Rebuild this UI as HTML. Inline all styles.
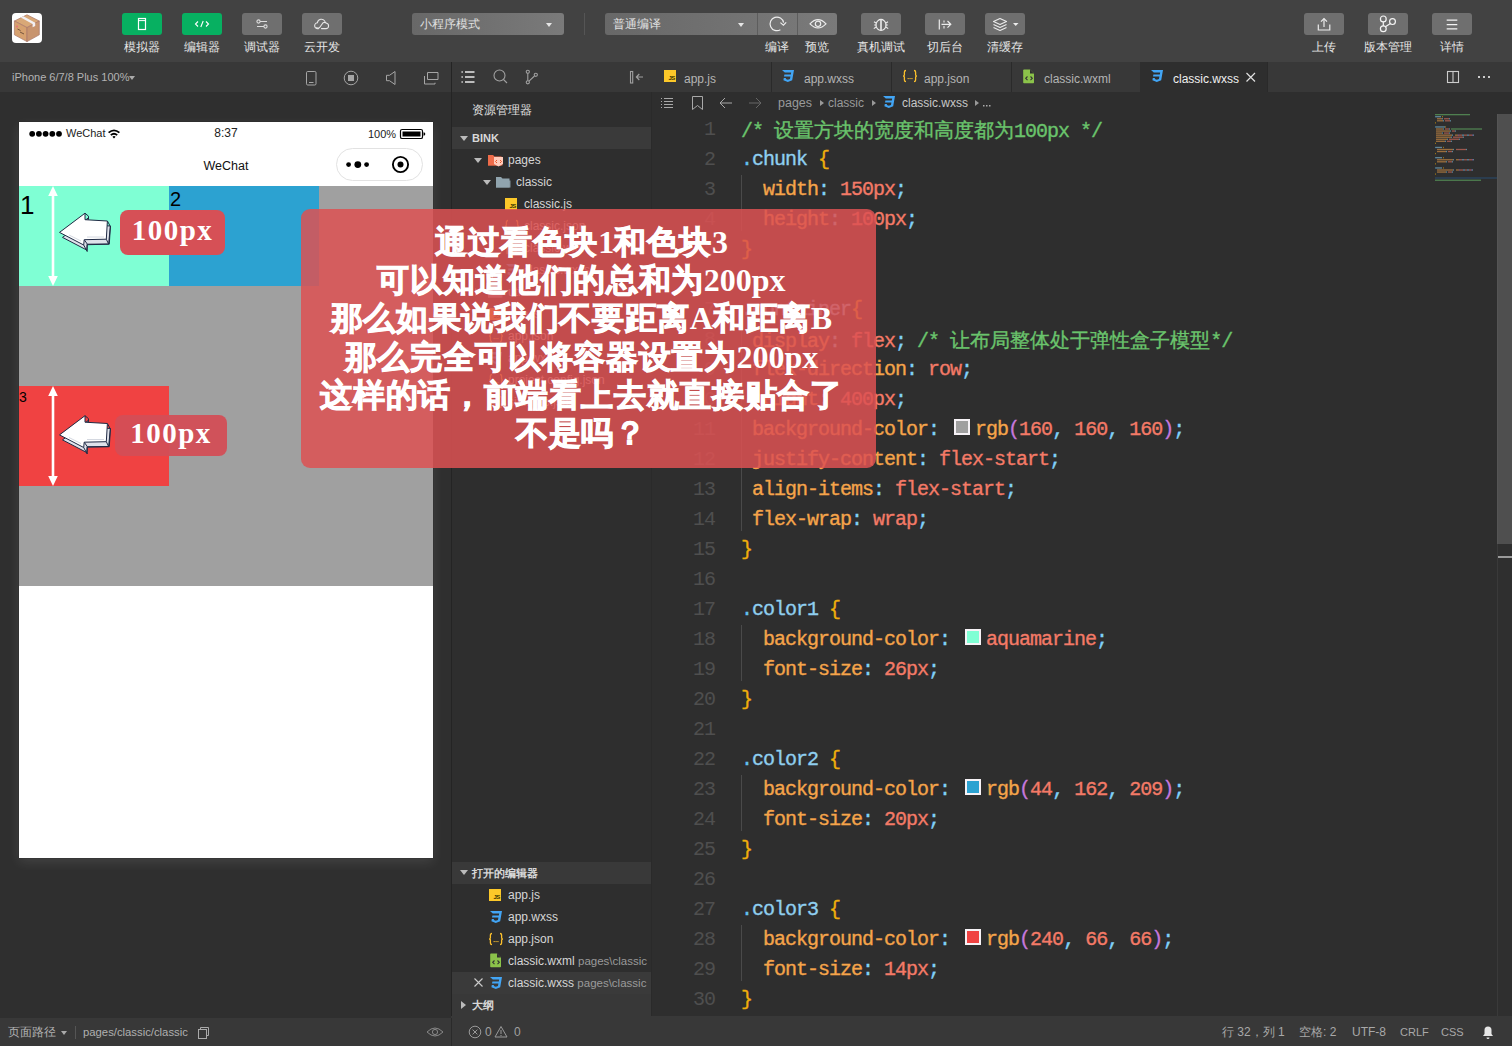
<!DOCTYPE html>
<html><head><meta charset="utf-8">
<style>
*{box-sizing:border-box;margin:0;padding:0}
html,body{width:1512px;height:1046px;overflow:hidden;background:#2e2e2e;font-family:"Liberation Sans",sans-serif;color:#ccc}
.a{position:absolute}
svg{position:absolute;overflow:visible}
.cj{font-size:1.25em;letter-spacing:.05em;-webkit-text-stroke:.35px}
.lbl.cj{font-size:15px;letter-spacing:.75px;text-indent:.75px}
#top{left:0;top:0;width:1512px;height:62px;background:#424242}
.btn{position:absolute;top:13px;width:40px;height:22px;border-radius:3px;background:#6f6f6f}
.btn.g{background:#07b061}
.lbl{position:absolute;top:40px;font-size:12px;color:#e6e6e6;text-align:center;width:80px;line-height:14px;white-space:nowrap}
.dd{position:absolute;top:13px;height:22px;background:linear-gradient(90deg,#686868,#7a7a7a);border-radius:3px;font-size:12px;color:#e0e0e0;line-height:22px;padding-left:8px;white-space:nowrap}
.car{position:absolute;width:0;height:0;border-left:3px solid transparent;border-right:3px solid transparent;border-top:4px solid #e6e6e6}
#row2{left:0;top:62px;width:1512px;height:30px;background:#383838}
#sim{left:0;top:92px;width:451px;height:926px;background:#2f2f2f}
#vsep{left:451px;top:62px;width:1px;height:956px;background:#242424}
#tree{left:452px;top:92px;width:199px;height:924px;background:#2e2e2e}
#editor{left:652px;top:92px;width:860px;height:924px;background:#2e2e2e;overflow:hidden}
#status{left:0;top:1016px;width:1512px;height:30px;background:#383838}
#phone{left:19px;top:122px;width:414px;height:736px;background:#fff;box-shadow:0 0 1px rgba(0,0,0,.5),0 4px 11px rgba(255,255,255,.1)}
.ln{position:absolute;left:0;width:63px;text-align:right;font-family:"Liberation Mono",monospace;font-size:20px;letter-spacing:-1px;line-height:30px;color:#4f4f4f}
.cl{position:absolute;left:89px;font-family:"Liberation Mono",monospace;font-size:20px;letter-spacing:-1px;line-height:30px;white-space:pre;color:#ccc;-webkit-text-stroke-width:.35px}
.cjm{font-family:"Liberation Sans",sans-serif;font-size:22px;letter-spacing:2.8px}
.sw{display:inline-block;width:25px;height:14px;position:relative;vertical-align:-1px}
.sw i{position:absolute;left:4px;top:-3px;width:16px;height:16px;border:2px solid #f6f2f6}
#overlay{z-index:10;left:301px;top:209px;width:575px;height:259px;border-radius:9px;background:rgba(220,81,83,.86)}
.ot{position:absolute;left:3px;top:14px;width:555px;text-align:center;font-family:"Liberation Serif",serif;font-weight:bold;font-size:32px;line-height:38.2px;color:#fff;white-space:nowrap}
.ol{height:38.2px;overflow:visible}
.oc{font-family:"Liberation Sans",sans-serif;font-weight:bold;font-size:37px;letter-spacing:4.9px;-webkit-text-stroke:3px #fff}
.hascjk .cj{font-size:1em;letter-spacing:0;-webkit-text-stroke:0}
.hascjk .lbl.cj{font-size:12px;letter-spacing:0;text-indent:0}
.hascjk .cjm{font-size:19.8px;letter-spacing:0}
.hascjk .oc{font-size:32px;letter-spacing:.02em;-webkit-text-stroke:1px #fff}
</style></head><body>
<!-- TOP TOOLBAR -->
<div id="top" class="a">
  <div class="a" style="left:12px;top:13px;width:30px;height:30px;background:#fff;border-radius:4px">
    <svg width="30" height="30" viewBox="0 0 30 30">
      <path d="M15 1.8 L27.3 8 L15 14.6 L2.4 8 Z" fill="#d9a877" stroke="#a9776a" stroke-width=".7"/>
      <path d="M2.4 8 L15 14.6 L15 28.6 L2.4 21.8 Z" fill="#d6a16f" stroke="#a9776a" stroke-width=".7"/>
      <path d="M15 14.6 L27.3 8 L27.3 21.8 L15 28.6 Z" fill="#c8946e" stroke="#a9776a" stroke-width=".7"/>
      <path d="M8.8 4.6 L11.4 3.3 L23.2 9.7 L23.2 13 L20.6 14.3 L20.6 11 Z" fill="#f2f0f4"/>
      <path d="M5.5 16 l3 1.5 M8 19 l4 2" stroke="#5a4030" stroke-width=".8"/>
      <circle cx="5" cy="13.5" r="1" fill="#e8707a"/>
    </svg>
  </div>
  <div class="btn g" style="left:122px"><svg width="40" height="22"><rect x="16.5" y="5.5" width="7" height="11" fill="none" stroke="#fff" stroke-width="1.2"/><line x1="17" y1="7.6" x2="23" y2="7.6" stroke="#fff" stroke-width="1"/></svg></div>
  <div class="lbl cj" style="left:102px">模拟器</div>
  <div class="btn g" style="left:182px"><svg width="40" height="22"><path d="M16 8.5 L13.5 11 L16 13.5 M24 8.5 L26.5 11 L24 13.5 M21.2 8 L18.8 14" fill="none" stroke="#fff" stroke-width="1.1"/></svg></div>
  <div class="lbl cj" style="left:162px">编辑器</div>
  <div class="btn" style="left:242px"><svg width="40" height="22"><path d="M18 8.5 H25 M15 13.5 H22" stroke="#ddd" stroke-width="1.1"/><circle cx="16.5" cy="8.5" r="1.6" fill="none" stroke="#ddd" stroke-width="1.1"/><circle cx="23.5" cy="13.5" r="1.6" fill="none" stroke="#ddd" stroke-width="1.1"/></svg></div>
  <div class="lbl cj" style="left:222px">调试器</div>
  <div class="btn" style="left:302px"><svg width="40" height="22"><path d="M16.5 15.6 h-.8 a2.9 2.9 0 0 1 -.3-5.8 a4 4 0 0 1 7.6-1.2 M19.5 15.6 h4.5 a2.7 2.7 0 0 0 .6-5.3 a3.2 3.2 0 0 0 -3.5-.6 L18 14 a2.2 2.2 0 0 1 -3.3.6" fill="none" stroke="#e6e6e6" stroke-width="1.1" stroke-linecap="round"/></svg></div>
  <div class="lbl cj" style="left:282px">云开发</div>

  <div class="dd" style="left:412px;width:152px"><span class="cj">小程序模式</span><div class="car" style="left:134px;top:10px"></div></div>
  <div class="a" style="left:584px;top:13px;width:1px;height:22px;background:#555"></div>
  <div class="dd" style="left:605px;width:232px"><span class="cj">普通编译</span><div class="car" style="left:133px;top:10px"></div>
    <div class="a" style="left:152px;top:0;width:1px;height:22px;background:#5d5d5d"></div>
    <div class="a" style="left:192px;top:0;width:1px;height:22px;background:#5d5d5d"></div>
    <svg width="232" height="22" style="left:0;top:0"><path d="M175.4 16.7 A6.8 6.8 0 1 1 178.6 9.6" fill="none" stroke="#ececec" stroke-width="1.2"/><path d="M175.4 9.6 L178.4 12.2 L181.2 9.3" fill="none" stroke="#ececec" stroke-width="1.2"/>
      <path d="M205 10.8 Q213 2.5 221 10.8 Q213 19 205 10.8 Z" fill="none" stroke="#ececec" stroke-width="1.2"/><circle cx="213" cy="10.8" r="2.7" fill="none" stroke="#ececec" stroke-width="1.2"/></svg>
  </div>
  <div class="lbl cj" style="left:737px">编译</div><div class="lbl cj" style="left:777px">预览</div>
  <div class="btn" style="left:861px"><svg width="40" height="22"><path d="M17.5 7.5 a2.8 2.2 0 0 1 5 0" fill="none" stroke="#ececec" stroke-width="1.1"/><ellipse cx="20" cy="12" rx="5" ry="5.5" fill="none" stroke="#ececec" stroke-width="1.2"/><path d="M20 7 V17.2" stroke="#ececec" stroke-width="1.6"/><path d="M15 10 l-2-1.2 M15 14 l-2.2 1.6 M25 10 l2-1.2 M25 14 l2.2 1.6 M12.8 8.5 v0.01 M15.2 12 h-2 M24.8 12 h2" fill="none" stroke="#ececec" stroke-width="1.1"/></svg></div>
  <div class="lbl cj" style="left:841px">真机调试</div>
  <div class="btn" style="left:925px"><svg width="40" height="22"><path d="M14.3 6.5 V16.5" stroke="#ececec" stroke-width="1.2"/><path d="M19 7.5 v2 M19 13 v2.5" stroke="#ececec" stroke-width="1.1"/><path d="M16.5 11.3 H25.5 M22.5 8 L25.8 11.3 L22.5 14.6" fill="none" stroke="#ececec" stroke-width="1.2"/></svg></div>
  <div class="lbl cj" style="left:905px">切后台</div>
  <div class="btn" style="left:985px"><svg width="40" height="22"><path d="M8.5 8.5 L15 5.5 L21.5 8.5 L15 11.5 Z M8.5 11.5 L15 14.5 L21.5 11.5 M8.5 14.5 L15 17.5 L21.5 14.5" fill="none" stroke="#ececec" stroke-width="1.1" stroke-linejoin="round"/><path d="M28 10 h5.5 l-2.75 3 z" fill="#ececec"/></svg></div>
  <div class="lbl cj" style="left:965px">清缓存</div>

  <div class="btn" style="left:1304px"><svg width="40" height="22"><path d="M14.3 11.5 V17 H25.8 V11.5" fill="none" stroke="#ececec" stroke-width="1.2"/><path d="M20 5.8 V14" stroke="#cfcfcf" stroke-width="1.6"/><path d="M17 8.6 L20 5.6 L23 8.6" fill="none" stroke="#ececec" stroke-width="1.2"/></svg></div>
  <div class="lbl cj" style="left:1284px">上传</div>
  <div class="btn" style="left:1368px"><svg width="40" height="22"><g fill="none" stroke="#f4f4f4" stroke-width="1.2"><circle cx="15.3" cy="5.9" r="2.9"/><circle cx="15.3" cy="15.8" r="2.9"/><circle cx="24.5" cy="8.6" r="2.9"/><path d="M15.3 8.8 V12.9 M17.4 13.8 L22.4 10.6"/></g></svg></div>
  <div class="lbl cj" style="left:1348px">版本管理</div>
  <div class="btn" style="left:1432px"><svg width="40" height="22"><path d="M14.7 7.2 H25.3 M14.7 11.6 H25.3 M14.7 15.8 H25.3" stroke="#f4f4f4" stroke-width="1.2"/></svg></div>
  <div class="lbl cj" style="left:1412px">详情</div>
</div>
<div id="row2" class="a">
  <div class="a" style="left:12px;top:8px;font-size:11px;color:#b4b4b4;line-height:14px;white-space:nowrap">iPhone 6/7/8 Plus 100%</div>
  <div class="car" style="left:129px;top:14px;border-top-color:#aaa;border-left-width:3px;border-right-width:3px"></div>
  <svg width="451" height="30" style="left:0;top:0">
    <g fill="none" stroke="#a6a6a6" stroke-width="1">
      <rect x="306.5" y="9.5" width="9.5" height="13.5" rx="1.2"/><path d="M309 20.5 h4.5"/>
      <circle cx="351" cy="16" r="6.8"/>
      <path d="M386.5 13.3 h3 l5.5-3.8 v13 l-5.5-3.8 h-3 z" stroke-linejoin="round"/>
      <path d="M427.5 10.5 h10.5 v7 h-10.5 z M424.5 14 v8 h10.5 v-1.3"/>
    </g>
    <rect x="348" y="13" width="6" height="6" fill="#a6a6a6"/>
  </svg>
  <svg width="200" height="30" style="left:452px;top:0">
    <g stroke="#e8e8e8" stroke-width="1.3"><path d="M9.5 10 h1.3 M9.5 15 h1.3 M9.5 20 h1.3 M13 10 h9.5 M13 15 h9.5 M13 20 h9.5"/></g>
    <g fill="none" stroke="#a0a0a0" stroke-width="1.1">
      <circle cx="47.5" cy="13.5" r="5.5"/><path d="M51.5 17.5 L55 21"/>
      <circle cx="75.8" cy="9.8" r="1.6"/><circle cx="75.8" cy="20.3" r="1.6"/><circle cx="83.8" cy="12.8" r="1.6"/><path d="M75.8 11.4 V18.7 M77 19.2 L82.5 14"/>
      <rect x="178.5" y="9.5" width="2.2" height="11.5"/><path d="M184.5 15 H191 M187.3 12 L184.3 15 L187.3 18"/>
    </g>
  </svg>
  <!-- tabs -->
  <div class="a" style="left:652px;top:0;width:860px;height:30px;background:#383838"></div>
  <div class="a" style="left:771px;top:0;width:1px;height:30px;background:#2a2a2a"></div>
  <div class="a" style="left:891px;top:0;width:1px;height:30px;background:#2a2a2a"></div>
  <div class="a" style="left:1011px;top:0;width:1px;height:30px;background:#2a2a2a"></div>
  <div class="a" style="left:1140px;top:0;width:128px;height:30px;background:#2e2e2e"></div>
  <div class="a" style="left:1267px;top:0;width:1px;height:30px;background:#2a2a2a"></div>
  <div class="a" style="left:664px;top:8px;width:12px;height:12px;background:#fcc829"></div>
  <div class="a" style="left:668.5px;top:12.5px;font-size:6px;font-weight:bold;color:#3a3000;line-height:7px;letter-spacing:-.6px">JS</div>
  <div class="a" style="left:684px;top:9px;font-size:12px;color:#b4b4b4;line-height:16px">app.js</div>
  <svg width="16" height="16" style="left:782px;top:69px"></svg>
  <div class="a" style="left:804px;top:9px;font-size:12px;color:#b4b4b4;line-height:16px">app.wxss</div>
  <div class="a" style="left:924px;top:9px;font-size:12px;color:#b4b4b4;line-height:16px">app.json</div>
  <div class="a" style="left:1044px;top:9px;font-size:12px;color:#b4b4b4;line-height:16px">classic.wxml</div>
  <div class="a" style="left:1173px;top:9px;font-size:12px;color:#f0f0f0;line-height:16px">classic.wxss</div>
  <svg width="860" height="30" style="left:652px;top:0">
    <g fill="#42a5f5">
      <path d="M130 8 h12 l-1.8 10.2 l-4.4 1.8 l-4.4-1.8 l.4-2.2 h2.2 l-.2 1 l2 .8 l2.2-.8 l.4-2.4 h-6.4 l.4-2 h6.4 l.4-2 h-6.4 z" transform="translate(0,0)"/>
      <path d="M130 8 h12 l-1.8 10.2 l-4.4 1.8 l-4.4-1.8 l.4-2.2 h2.2 l-.2 1 l2 .8 l2.2-.8 l.4-2.4 h-6.4 l.4-2 h6.4 l.4-2 h-6.4 z" transform="translate(369,0)"/>
    </g>
    <g fill="none" stroke="#fbc02d" stroke-width="1.3">
      <path d="M254 8.5 q-1.6 0-1.6 1.6 v2.6 q0 1.3-1.3 1.3 q1.3 0 1.3 1.3 v2.6 q0 1.6 1.6 1.6 M262 8.5 q1.6 0 1.6 1.6 v2.6 q0 1.3 1.3 1.3 q-1.3 0-1.3 1.3 v2.6 q0 1.6-1.6 1.6"/>
    </g>
    <g fill="#fbc02d"><rect x="255.6" y="16" width="1.1" height="1.1"/><rect x="257.5" y="16" width="1.1" height="1.1"/><rect x="259.4" y="16" width="1.1" height="1.1"/></g>
    <path d="M372 7.5 h6 l4 4 v9 q0 .8-.8.8 h-9.2 q-.8 0-.8-.8 v-12.2 q0-.8.8-.8 z" fill="#8bc34a"/>
    <path d="M378 7.5 v4 h4" fill="#2f2f2f"/>
    <path d="M375.5 14.5 l-1.8 1.8 l1.8 1.8 M378.5 14.5 l1.8 1.8 l-1.8 1.8" fill="none" stroke="#333" stroke-width="1.1"/>
    <path d="M594.5 11 l8.5 8.5 M603 11 l-8.5 8.5" stroke="#e0e0e0" stroke-width="1.2"/>
    <g fill="none" stroke="#ccc" stroke-width="1.1"><rect x="795.5" y="9.5" width="11" height="11"/><path d="M801 9.5 v11"/></g>
    <g fill="#ccc"><rect x="826" y="14" width="2" height="2"/><rect x="831" y="14" width="2" height="2"/><rect x="836" y="14" width="2" height="2"/></g>
  </svg>
</div>
<div id="sim" class="a"></div>
<div id="tree" class="a"><div class="a" style="left:20px;top:10px;font-size:12px;color:#e0e0e0;line-height:16px;white-space:nowrap;"><span class="cj">资源管理器</span></div>
<div class="a" style="left:0;top:35px;width:199px;height:22px;background:#3a3a3a"></div>
<div class="a" style="left:8px;top:44px;width:0;height:0;border-left:4px solid transparent;border-right:4px solid transparent;border-top:5px solid #bbb"></div>
<div class="a" style="left:20px;top:38px;font-size:11px;color:#d8d8d8;line-height:16px;white-space:nowrap;font-weight:bold">BINK</div>
<div class="a" style="left:22px;top:66px;width:0;height:0;border-left:4px solid transparent;border-right:4px solid transparent;border-top:5px solid #bbb"></div>
<svg width="16" height="14" style="left:35px;top:61px"><path d="M1 2 h5 l1.5 1.5 h7 v9 h-13.5 z" fill="#ef6c4a"/><path d="M1 5.5 h14.5 v7 h-14.5 z" fill="#ef6c4a" opacity=".85"/></svg>
<svg width="12" height="12" style="left:41px;top:64px"><path d="M1 1 h9 v7 l-4.5 2.5 l-4.5-2.5 z" fill="#ffccbc"/><path d="M4 4 l-1.5 1.5 l1.5 1.5 M7 4 l1.5 1.5 l-1.5 1.5" stroke="#e64a19" stroke-width=".9" fill="none"/></svg>
<div class="a" style="left:56px;top:60px;font-size:12px;color:#d6d6d6;line-height:16px;white-space:nowrap;">pages</div>
<div class="a" style="left:31px;top:88px;width:0;height:0;border-left:4px solid transparent;border-right:4px solid transparent;border-top:5px solid #bbb"></div>
<svg width="16" height="14" style="left:43px;top:83px"><path d="M1 2 h5 l1.5 1.5 h7 v9 h-13.5 z" fill="#90a4ae"/><path d="M1 5.5 h14.5 v7 h-14.5 z" fill="#90a4ae" opacity=".85"/></svg>
<div class="a" style="left:64px;top:82px;font-size:12px;color:#d6d6d6;line-height:16px;white-space:nowrap;">classic</div>
<div class="a" style="left:53px;top:106px;width:12px;height:12px;background:#fcc829"><div class="a" style="left:4.5px;top:4.5px;font-size:6px;font-weight:bold;color:#3a3000;line-height:7px;letter-spacing:-.6px">JS</div></div>
<div class="a" style="left:72px;top:104px;font-size:12px;color:#d6d6d6;line-height:16px;white-space:nowrap;">classic.js</div>
<svg width="16" height="14" style="left:52px;top:127px"><path d="M4 1.5 q-1.6 0-1.6 1.6 v2.6 q0 1.3-1.3 1.3 q1.3 0 1.3 1.3 v2.6 q0 1.6 1.6 1.6 M12 1.5 q1.6 0 1.6 1.6 v2.6 q0 1.3 1.3 1.3 q-1.3 0-1.3 1.3 v2.6 q0 1.6-1.6 1.6" fill="none" stroke="#fbc02d" stroke-width="1.3"/><g fill="#fbc02d"><rect x="5.6" y="9" width="1.1" height="1.1"/><rect x="7.5" y="9" width="1.1" height="1.1"/><rect x="9.4" y="9" width="1.1" height="1.1"/></g></svg>
<div class="a" style="left:72px;top:126px;font-size:12px;color:#d6d6d6;line-height:16px;white-space:nowrap;">classic.json</div>
<svg width="12" height="16" style="left:54px;top:148px"><path d="M1 .5 h6 l4 4 v9 q0 .8-.8.8 h-9.2 q-.8 0-.8-.8 v-12.2 q0-.8.8-.8 z" fill="#8bc34a"/><path d="M7 .5 v4 h4" fill="#2f2f2f"/><path d="M4.5 7.5 l-1.8 1.8 l1.8 1.8 M7.5 7.5 l1.8 1.8 l-1.8 1.8" fill="none" stroke="#333" stroke-width="1.1"/></svg>
<div class="a" style="left:72px;top:148px;font-size:12px;color:#d6d6d6;line-height:16px;white-space:nowrap;">classic.wxml</div>
<svg width="14" height="14" style="left:53px;top:171px"><path d="M1 1 h12 l-1.8 10.2 l-4.4 1.8 l-4.4-1.8 l.4-2.2 h2.2 l-.2 1 l2 .8 l2.2-.8 l.4-2.4 h-6.4 l.4-2 h6.4 l.4-2 h-6.4 z" fill="#42a5f5"/></svg>
<div class="a" style="left:72px;top:170px;font-size:12px;color:#d6d6d6;line-height:16px;white-space:nowrap;">classic.wxss</div>
<div class="a" style="left:23px;top:196px;width:0;height:0;border-top:4px solid transparent;border-bottom:4px solid transparent;border-left:5px solid #bbb"></div>
<svg width="16" height="14" style="left:35px;top:193px"><path d="M1 2 h5 l1.5 1.5 h7 v9 h-13.5 z" fill="#90a4ae"/><path d="M1 5.5 h14.5 v7 h-14.5 z" fill="#90a4ae" opacity=".85"/></svg>
<div class="a" style="left:56px;top:192px;font-size:12px;color:#d6d6d6;line-height:16px;white-space:nowrap;">utils</div>
<div class="a" style="left:37px;top:216px;width:12px;height:12px;background:#fcc829"><div class="a" style="left:4.5px;top:4.5px;font-size:6px;font-weight:bold;color:#3a3000;line-height:7px;letter-spacing:-.6px">JS</div></div>
<div class="a" style="left:56px;top:214px;font-size:12px;color:#d6d6d6;line-height:16px;white-space:nowrap;">app.js</div>
<svg width="16" height="14" style="left:36px;top:237px"><path d="M4 1.5 q-1.6 0-1.6 1.6 v2.6 q0 1.3-1.3 1.3 q1.3 0 1.3 1.3 v2.6 q0 1.6 1.6 1.6 M12 1.5 q1.6 0 1.6 1.6 v2.6 q0 1.3 1.3 1.3 q-1.3 0-1.3 1.3 v2.6 q0 1.6-1.6 1.6" fill="none" stroke="#fbc02d" stroke-width="1.3"/><g fill="#fbc02d"><rect x="5.6" y="9" width="1.1" height="1.1"/><rect x="7.5" y="9" width="1.1" height="1.1"/><rect x="9.4" y="9" width="1.1" height="1.1"/></g></svg>
<div class="a" style="left:56px;top:236px;font-size:12px;color:#d6d6d6;line-height:16px;white-space:nowrap;">app.json</div>
<svg width="14" height="14" style="left:37px;top:259px"><path d="M1 1 h12 l-1.8 10.2 l-4.4 1.8 l-4.4-1.8 l.4-2.2 h2.2 l-.2 1 l2 .8 l2.2-.8 l.4-2.4 h-6.4 l.4-2 h6.4 l.4-2 h-6.4 z" fill="#42a5f5"/></svg>
<div class="a" style="left:56px;top:258px;font-size:12px;color:#d6d6d6;line-height:16px;white-space:nowrap;">app.wxss</div>
<svg width="16" height="14" style="left:36px;top:281px"><path d="M4 1.5 q-1.6 0-1.6 1.6 v2.6 q0 1.3-1.3 1.3 q1.3 0 1.3 1.3 v2.6 q0 1.6 1.6 1.6 M12 1.5 q1.6 0 1.6 1.6 v2.6 q0 1.3 1.3 1.3 q-1.3 0-1.3 1.3 v2.6 q0 1.6-1.6 1.6" fill="none" stroke="#fbc02d" stroke-width="1.3"/><g fill="#fbc02d"><rect x="5.6" y="9" width="1.1" height="1.1"/><rect x="7.5" y="9" width="1.1" height="1.1"/><rect x="9.4" y="9" width="1.1" height="1.1"/></g></svg>
<div class="a" style="left:56px;top:280px;font-size:12px;color:#d6d6d6;line-height:16px;white-space:nowrap;">project.config.json</div>
<svg width="16" height="14" style="left:36px;top:303px"><path d="M4 1.5 q-1.6 0-1.6 1.6 v2.6 q0 1.3-1.3 1.3 q1.3 0 1.3 1.3 v2.6 q0 1.6 1.6 1.6 M12 1.5 q1.6 0 1.6 1.6 v2.6 q0 1.3 1.3 1.3 q-1.3 0-1.3 1.3 v2.6 q0 1.6-1.6 1.6" fill="none" stroke="#fbc02d" stroke-width="1.3"/><g fill="#fbc02d"><rect x="5.6" y="9" width="1.1" height="1.1"/><rect x="7.5" y="9" width="1.1" height="1.1"/><rect x="9.4" y="9" width="1.1" height="1.1"/></g></svg>
<div class="a" style="left:56px;top:302px;font-size:12px;color:#d6d6d6;line-height:16px;white-space:nowrap;">sitemap.json</div>
<div class="a" style="left:0;top:770px;width:199px;height:22px;background:#393939"></div>
<div class="a" style="left:8px;top:778px;width:0;height:0;border-left:4px solid transparent;border-right:4px solid transparent;border-top:5px solid #bbb"></div>
<div class="a" style="left:20px;top:773px;font-size:11px;color:#d8d8d8;line-height:16px;white-space:nowrap;font-weight:bold"><span class="cj">打开的编辑器</span></div>
<div class="a" style="left:0;top:880px;width:199px;height:22px;background:#3a3a3a"></div><div class="a" style="left:0;top:902px;width:199px;height:22px;background:#383838"></div>
<div class="a" style="left:37px;top:797px;width:12px;height:12px;background:#fcc829"><div class="a" style="left:4.5px;top:4.5px;font-size:6px;font-weight:bold;color:#3a3000;line-height:7px;letter-spacing:-.6px">JS</div></div>
<div class="a" style="left:56px;top:795px;font-size:12px;color:#d6d6d6;line-height:16px;white-space:nowrap;">app.js</div>
<svg width="14" height="14" style="left:37px;top:818px"><path d="M1 1 h12 l-1.8 10.2 l-4.4 1.8 l-4.4-1.8 l.4-2.2 h2.2 l-.2 1 l2 .8 l2.2-.8 l.4-2.4 h-6.4 l.4-2 h6.4 l.4-2 h-6.4 z" fill="#42a5f5"/></svg>
<div class="a" style="left:56px;top:817px;font-size:12px;color:#d6d6d6;line-height:16px;white-space:nowrap;">app.wxss</div>
<svg width="16" height="14" style="left:36px;top:840px"><path d="M4 1.5 q-1.6 0-1.6 1.6 v2.6 q0 1.3-1.3 1.3 q1.3 0 1.3 1.3 v2.6 q0 1.6 1.6 1.6 M12 1.5 q1.6 0 1.6 1.6 v2.6 q0 1.3 1.3 1.3 q-1.3 0-1.3 1.3 v2.6 q0 1.6-1.6 1.6" fill="none" stroke="#fbc02d" stroke-width="1.3"/><g fill="#fbc02d"><rect x="5.6" y="9" width="1.1" height="1.1"/><rect x="7.5" y="9" width="1.1" height="1.1"/><rect x="9.4" y="9" width="1.1" height="1.1"/></g></svg>
<div class="a" style="left:56px;top:839px;font-size:12px;color:#d6d6d6;line-height:16px;white-space:nowrap;">app.json</div>
<svg width="12" height="16" style="left:38px;top:861px"><path d="M1 .5 h6 l4 4 v9 q0 .8-.8.8 h-9.2 q-.8 0-.8-.8 v-12.2 q0-.8.8-.8 z" fill="#8bc34a"/><path d="M7 .5 v4 h4" fill="#2f2f2f"/><path d="M4.5 7.5 l-1.8 1.8 l1.8 1.8 M7.5 7.5 l1.8 1.8 l-1.8 1.8" fill="none" stroke="#333" stroke-width="1.1"/></svg>
<div class="a" style="left:56px;top:861px;font-size:12px;color:#d6d6d6;line-height:16px;white-space:nowrap;">classic.wxml <span style="font-size:11.5px;color:#9a9a9a">pages\classic</span></div>
<svg width="14" height="14" style="left:37px;top:884px"><path d="M1 1 h12 l-1.8 10.2 l-4.4 1.8 l-4.4-1.8 l.4-2.2 h2.2 l-.2 1 l2 .8 l2.2-.8 l.4-2.4 h-6.4 l.4-2 h6.4 l.4-2 h-6.4 z" fill="#42a5f5"/></svg>
<div class="a" style="left:56px;top:883px;font-size:12px;color:#d6d6d6;line-height:16px;white-space:nowrap;">classic.wxss <span style="font-size:11.5px;color:#9a9a9a">pages\classic</span></div>
<svg width="12" height="12" style="left:21px;top:885px"><path d="M1.5 1.5 l8 8 M9.5 1.5 l-8 8" stroke="#ccc" stroke-width="1.1"/></svg>
<div class="a" style="left:9px;top:909px;width:0;height:0;border-top:4px solid transparent;border-bottom:4px solid transparent;border-left:5px solid #bbb"></div>
<div class="a" style="left:20px;top:905px;font-size:11px;color:#d8d8d8;line-height:16px;white-space:nowrap;font-weight:bold"><span class="cj">大纲</span></div></div>
<div id="editor" class="a"><svg width="300" height="22" style="left:0;top:0">
 <g stroke="#a8a8a8" stroke-width="1" fill="none">
  <path d="M9 6.5 h1 M9 9.5 h1 M9 12.5 h1 M9 15.5 h1 M12 6.5 h9 M12 9.5 h9 M12 12.5 h9 M12 15.5 h9"/>
  <path d="M40.5 4.5 h10 v13 l-5-4 l-5 4 z"/>
  <path d="M68 11 h12 M73 6 l-5 5 l5 5"/>
  <path d="M97 11 h12 M104 6 l5 5 l-5 5" stroke="#666"/>
 </g>
 <g fill="#999"><path d="M168 8 l4 3 l-4 3 z M220 8 l4 3 l-4 3 z"/></g>
 <path d="M231 4 h12 l-1.8 10.2 l-4.4 1.8 l-4.4-1.8 l.4-2.2 h2.2 l-.2 1 l2 .8 l2.2-.8 l.4-2.4 h-6.4 l.4-2 h6.4 l.4-2 h-6.4 z" fill="#42a5f5"/>
</svg>
<div class="a" style="left:126px;top:3px;font-size:12.5px;color:#9a9a9a;line-height:16px">pages</div>
<div class="a" style="left:176px;top:3px;font-size:12px;color:#9a9a9a;line-height:16px">classic</div>
<div class="a" style="left:250px;top:3px;font-size:12px;color:#c8c8c8;line-height:16px">classic.wxss</div>
<svg width="20" height="22" style="left:320px;top:0"><path d="M3 8 l4 3 l-4 3 z" fill="#999"/><g fill="#aaa"><rect x="11" y="13" width="1.5" height="1.5"/><rect x="14" y="13" width="1.5" height="1.5"/><rect x="17" y="13" width="1.5" height="1.5"/></g></svg>
<div class="ln" style="top:22.5px">1</div>
<div class="ln" style="top:52.5px">2</div>
<div class="ln" style="top:82.5px">3</div>
<div class="ln" style="top:112.5px">4</div>
<div class="ln" style="top:142.5px">5</div>
<div class="ln" style="top:172.5px">6</div>
<div class="ln" style="top:202.5px">7</div>
<div class="ln" style="top:232.5px">8</div>
<div class="ln" style="top:262.5px">9</div>
<div class="ln" style="top:292.5px">10</div>
<div class="ln" style="top:322.5px">11</div>
<div class="ln" style="top:352.5px">12</div>
<div class="ln" style="top:382.5px">13</div>
<div class="ln" style="top:412.5px">14</div>
<div class="ln" style="top:442.5px">15</div>
<div class="ln" style="top:472.5px">16</div>
<div class="ln" style="top:502.5px">17</div>
<div class="ln" style="top:532.5px">18</div>
<div class="ln" style="top:562.5px">19</div>
<div class="ln" style="top:592.5px">20</div>
<div class="ln" style="top:622.5px">21</div>
<div class="ln" style="top:652.5px">22</div>
<div class="ln" style="top:682.5px">23</div>
<div class="ln" style="top:712.5px">24</div>
<div class="ln" style="top:742.5px">25</div>
<div class="ln" style="top:772.5px">26</div>
<div class="ln" style="top:802.5px">27</div>
<div class="ln" style="top:832.5px">28</div>
<div class="ln" style="top:862.5px">29</div>
<div class="ln" style="top:892.5px">30</div>
<div class="a" style="left:89px;top:83px;width:1px;height:56px;background:#4a4a4a"></div>
<div class="a" style="left:89px;top:233px;width:1px;height:206px;background:#4a4a4a"></div>
<div class="a" style="left:89px;top:533px;width:1px;height:56px;background:#4a4a4a"></div>
<div class="a" style="left:89px;top:683px;width:1px;height:56px;background:#4a4a4a"></div>
<div class="a" style="left:89px;top:833px;width:1px;height:56px;background:#4a4a4a"></div>
<div class="cl" style="top:22.5px"><span style="color:#6ac46c">/* <span class="cjm">设置方块的宽度和高度都为</span>100px */</span></div>
<div class="cl" style="top:52.5px"><span style="color:#62bff0">.</span><span style="color:#8fcff0">chunk</span> <span style="color:#f0ae0c">{</span></div>
<div class="cl" style="top:82.5px">  <span style="color:#f5a44a">width</span><span style="color:#80d0f8">:</span> <span style="color:#f47a67">150px</span><span style="color:#80d0f8">;</span></div>
<div class="cl" style="top:112.5px">  <span style="color:#f5a44a">height</span><span style="color:#80d0f8">:</span> <span style="color:#f47a67">100px</span><span style="color:#80d0f8">;</span></div>
<div class="cl" style="top:142.5px"><span style="color:#f0ae0c">}</span></div>
<div class="cl" style="top:172.5px"></div>
<div class="cl" style="top:202.5px"><span style="color:#62bff0">.</span><span style="color:#8fcff0">container</span><span style="color:#f0ae0c">{</span></div>
<div class="cl" style="top:232.5px"> <span style="color:#f5a44a">display</span><span style="color:#80d0f8">:</span> <span style="color:#f47a67">flex</span><span style="color:#80d0f8">;</span> <span style="color:#6ac46c">/* <span class="cjm">让布局整体处于弹性盒子模型</span>*/</span></div>
<div class="cl" style="top:262.5px"> <span style="color:#f5a44a">flex-direction</span><span style="color:#80d0f8">:</span> <span style="color:#f47a67">row</span><span style="color:#80d0f8">;</span></div>
<div class="cl" style="top:292.5px"> <span style="color:#f5a44a">height</span><span style="color:#80d0f8">:</span> <span style="color:#f47a67">400px</span><span style="color:#80d0f8">;</span></div>
<div class="cl" style="top:322.5px"> <span style="color:#f5a44a">background-color</span><span style="color:#80d0f8">:</span> <span class="sw"><i style="background:#a0a0a0"></i></span><span style="color:#f5a44a">rgb</span><span style="color:#c678dd">(</span><span style="color:#f47a67">160</span><span style="color:#80d0f8">,</span> <span style="color:#f47a67">160</span><span style="color:#80d0f8">,</span> <span style="color:#f47a67">160</span><span style="color:#c678dd">)</span><span style="color:#80d0f8">;</span></div>
<div class="cl" style="top:352.5px"> <span style="color:#f5a44a">justify-content</span><span style="color:#80d0f8">:</span> <span style="color:#f47a67">flex-start</span><span style="color:#80d0f8">;</span></div>
<div class="cl" style="top:382.5px"> <span style="color:#f5a44a">align-items</span><span style="color:#80d0f8">:</span> <span style="color:#f47a67">flex-start</span><span style="color:#80d0f8">;</span></div>
<div class="cl" style="top:412.5px"> <span style="color:#f5a44a">flex-wrap</span><span style="color:#80d0f8">:</span> <span style="color:#f47a67">wrap</span><span style="color:#80d0f8">;</span></div>
<div class="cl" style="top:442.5px"><span style="color:#f0ae0c">}</span></div>
<div class="cl" style="top:472.5px"></div>
<div class="cl" style="top:502.5px"><span style="color:#62bff0">.</span><span style="color:#8fcff0">color1</span> <span style="color:#f0ae0c">{</span></div>
<div class="cl" style="top:532.5px">  <span style="color:#f5a44a">background-color</span><span style="color:#80d0f8">:</span> <span class="sw"><i style="background:#7fffd4"></i></span><span style="color:#f47a67">aquamarine</span><span style="color:#80d0f8">;</span></div>
<div class="cl" style="top:562.5px">  <span style="color:#f5a44a">font-size</span><span style="color:#80d0f8">:</span> <span style="color:#f47a67">26px</span><span style="color:#80d0f8">;</span></div>
<div class="cl" style="top:592.5px"><span style="color:#f0ae0c">}</span></div>
<div class="cl" style="top:622.5px"></div>
<div class="cl" style="top:652.5px"><span style="color:#62bff0">.</span><span style="color:#8fcff0">color2</span> <span style="color:#f0ae0c">{</span></div>
<div class="cl" style="top:682.5px">  <span style="color:#f5a44a">background-color</span><span style="color:#80d0f8">:</span> <span class="sw"><i style="background:#2ca2d1"></i></span><span style="color:#f5a44a">rgb</span><span style="color:#c678dd">(</span><span style="color:#f47a67">44</span><span style="color:#80d0f8">,</span> <span style="color:#f47a67">162</span><span style="color:#80d0f8">,</span> <span style="color:#f47a67">209</span><span style="color:#c678dd">)</span><span style="color:#80d0f8">;</span></div>
<div class="cl" style="top:712.5px">  <span style="color:#f5a44a">font-size</span><span style="color:#80d0f8">:</span> <span style="color:#f47a67">20px</span><span style="color:#80d0f8">;</span></div>
<div class="cl" style="top:742.5px"><span style="color:#f0ae0c">}</span></div>
<div class="cl" style="top:772.5px"></div>
<div class="cl" style="top:802.5px"><span style="color:#62bff0">.</span><span style="color:#8fcff0">color3</span> <span style="color:#f0ae0c">{</span></div>
<div class="cl" style="top:832.5px">  <span style="color:#f5a44a">background-color</span><span style="color:#80d0f8">:</span> <span class="sw"><i style="background:#f04242"></i></span><span style="color:#f5a44a">rgb</span><span style="color:#c678dd">(</span><span style="color:#f47a67">240</span><span style="color:#80d0f8">,</span> <span style="color:#f47a67">66</span><span style="color:#80d0f8">,</span> <span style="color:#f47a67">66</span><span style="color:#c678dd">)</span><span style="color:#80d0f8">;</span></div>
<div class="cl" style="top:862.5px">  <span style="color:#f5a44a">font-size</span><span style="color:#80d0f8">:</span> <span style="color:#f47a67">14px</span><span style="color:#80d0f8">;</span></div>
<div class="cl" style="top:892.5px"><span style="color:#f0ae0c">}</span></div>
<svg width="62" height="72" style="left:783px;top:22px;opacity:.55"><rect x="0" y="0.00" width="3" height="1.3" fill="#6ac46c"/><rect x="3" y="0.00" width="24" height="1.3" fill="#6ac46c"/><rect x="27" y="0.00" width="8" height="1.3" fill="#6ac46c"/><rect x="0" y="2.05" width="1" height="1.3" fill="#62bff0"/><rect x="1" y="2.05" width="5" height="1.3" fill="#8fcff0"/><rect x="7" y="2.05" width="1" height="1.3" fill="#f0ae0c"/><rect x="2" y="4.10" width="5" height="1.3" fill="#f5a44a"/><rect x="7" y="4.10" width="1" height="1.3" fill="#80d0f8"/><rect x="9" y="4.10" width="5" height="1.3" fill="#f47a67"/><rect x="14" y="4.10" width="1" height="1.3" fill="#80d0f8"/><rect x="2" y="6.15" width="6" height="1.3" fill="#f5a44a"/><rect x="8" y="6.15" width="1" height="1.3" fill="#80d0f8"/><rect x="10" y="6.15" width="5" height="1.3" fill="#f47a67"/><rect x="15" y="6.15" width="1" height="1.3" fill="#80d0f8"/><rect x="0" y="8.20" width="1" height="1.3" fill="#f0ae0c"/><rect x="0" y="12.30" width="1" height="1.3" fill="#62bff0"/><rect x="1" y="12.30" width="9" height="1.3" fill="#8fcff0"/><rect x="10" y="12.30" width="1" height="1.3" fill="#f0ae0c"/><rect x="1" y="14.35" width="7" height="1.3" fill="#f5a44a"/><rect x="8" y="14.35" width="1" height="1.3" fill="#80d0f8"/><rect x="10" y="14.35" width="4" height="1.3" fill="#f47a67"/><rect x="14" y="14.35" width="1" height="1.3" fill="#80d0f8"/><rect x="16" y="14.35" width="31" height="1.3" fill="#6ac46c"/><rect x="1" y="16.40" width="14" height="1.3" fill="#f5a44a"/><rect x="15" y="16.40" width="1" height="1.3" fill="#80d0f8"/><rect x="17" y="16.40" width="3" height="1.3" fill="#f47a67"/><rect x="20" y="16.40" width="1" height="1.3" fill="#80d0f8"/><rect x="1" y="18.45" width="6" height="1.3" fill="#f5a44a"/><rect x="7" y="18.45" width="1" height="1.3" fill="#80d0f8"/><rect x="9" y="18.45" width="5" height="1.3" fill="#f47a67"/><rect x="14" y="18.45" width="1" height="1.3" fill="#80d0f8"/><rect x="1" y="20.50" width="16" height="1.3" fill="#f5a44a"/><rect x="17" y="20.50" width="1" height="1.3" fill="#80d0f8"/><rect x="20" y="20.50" width="3" height="1.3" fill="#f5a44a"/><rect x="23" y="20.50" width="1" height="1.3" fill="#c678dd"/><rect x="24" y="20.50" width="3" height="1.3" fill="#f47a67"/><rect x="27" y="20.50" width="2" height="1.3" fill="#80d0f8"/><rect x="29" y="20.50" width="3" height="1.3" fill="#f47a67"/><rect x="32" y="20.50" width="2" height="1.3" fill="#80d0f8"/><rect x="34" y="20.50" width="3" height="1.3" fill="#f47a67"/><rect x="37" y="20.50" width="1" height="1.3" fill="#c678dd"/><rect x="38" y="20.50" width="1" height="1.3" fill="#80d0f8"/><rect x="1" y="22.55" width="15" height="1.3" fill="#f5a44a"/><rect x="16" y="22.55" width="1" height="1.3" fill="#80d0f8"/><rect x="18" y="22.55" width="10" height="1.3" fill="#f47a67"/><rect x="28" y="22.55" width="1" height="1.3" fill="#80d0f8"/><rect x="1" y="24.60" width="11" height="1.3" fill="#f5a44a"/><rect x="12" y="24.60" width="1" height="1.3" fill="#80d0f8"/><rect x="14" y="24.60" width="10" height="1.3" fill="#f47a67"/><rect x="24" y="24.60" width="1" height="1.3" fill="#80d0f8"/><rect x="1" y="26.65" width="9" height="1.3" fill="#f5a44a"/><rect x="10" y="26.65" width="1" height="1.3" fill="#80d0f8"/><rect x="12" y="26.65" width="4" height="1.3" fill="#f47a67"/><rect x="16" y="26.65" width="1" height="1.3" fill="#80d0f8"/><rect x="0" y="28.70" width="1" height="1.3" fill="#f0ae0c"/><rect x="0" y="32.80" width="1" height="1.3" fill="#62bff0"/><rect x="1" y="32.80" width="6" height="1.3" fill="#8fcff0"/><rect x="8" y="32.80" width="1" height="1.3" fill="#f0ae0c"/><rect x="2" y="34.85" width="16" height="1.3" fill="#f5a44a"/><rect x="18" y="34.85" width="1" height="1.3" fill="#80d0f8"/><rect x="21" y="34.85" width="10" height="1.3" fill="#f47a67"/><rect x="31" y="34.85" width="1" height="1.3" fill="#80d0f8"/><rect x="2" y="36.90" width="9" height="1.3" fill="#f5a44a"/><rect x="11" y="36.90" width="1" height="1.3" fill="#80d0f8"/><rect x="13" y="36.90" width="4" height="1.3" fill="#f47a67"/><rect x="17" y="36.90" width="1" height="1.3" fill="#80d0f8"/><rect x="0" y="38.95" width="1" height="1.3" fill="#f0ae0c"/><rect x="0" y="43.05" width="1" height="1.3" fill="#62bff0"/><rect x="1" y="43.05" width="6" height="1.3" fill="#8fcff0"/><rect x="8" y="43.05" width="1" height="1.3" fill="#f0ae0c"/><rect x="2" y="45.10" width="16" height="1.3" fill="#f5a44a"/><rect x="18" y="45.10" width="1" height="1.3" fill="#80d0f8"/><rect x="21" y="45.10" width="3" height="1.3" fill="#f5a44a"/><rect x="24" y="45.10" width="1" height="1.3" fill="#c678dd"/><rect x="25" y="45.10" width="2" height="1.3" fill="#f47a67"/><rect x="27" y="45.10" width="2" height="1.3" fill="#80d0f8"/><rect x="29" y="45.10" width="3" height="1.3" fill="#f47a67"/><rect x="32" y="45.10" width="2" height="1.3" fill="#80d0f8"/><rect x="34" y="45.10" width="3" height="1.3" fill="#f47a67"/><rect x="37" y="45.10" width="1" height="1.3" fill="#c678dd"/><rect x="38" y="45.10" width="1" height="1.3" fill="#80d0f8"/><rect x="2" y="47.15" width="9" height="1.3" fill="#f5a44a"/><rect x="11" y="47.15" width="1" height="1.3" fill="#80d0f8"/><rect x="13" y="47.15" width="4" height="1.3" fill="#f47a67"/><rect x="17" y="47.15" width="1" height="1.3" fill="#80d0f8"/><rect x="0" y="49.20" width="1" height="1.3" fill="#f0ae0c"/><rect x="0" y="53.30" width="1" height="1.3" fill="#62bff0"/><rect x="1" y="53.30" width="6" height="1.3" fill="#8fcff0"/><rect x="8" y="53.30" width="1" height="1.3" fill="#f0ae0c"/><rect x="2" y="55.35" width="16" height="1.3" fill="#f5a44a"/><rect x="18" y="55.35" width="1" height="1.3" fill="#80d0f8"/><rect x="21" y="55.35" width="3" height="1.3" fill="#f5a44a"/><rect x="24" y="55.35" width="1" height="1.3" fill="#c678dd"/><rect x="25" y="55.35" width="3" height="1.3" fill="#f47a67"/><rect x="28" y="55.35" width="2" height="1.3" fill="#80d0f8"/><rect x="30" y="55.35" width="2" height="1.3" fill="#f47a67"/><rect x="32" y="55.35" width="2" height="1.3" fill="#80d0f8"/><rect x="34" y="55.35" width="2" height="1.3" fill="#f47a67"/><rect x="36" y="55.35" width="1" height="1.3" fill="#c678dd"/><rect x="37" y="55.35" width="1" height="1.3" fill="#80d0f8"/><rect x="2" y="57.40" width="9" height="1.3" fill="#f5a44a"/><rect x="11" y="57.40" width="1" height="1.3" fill="#80d0f8"/><rect x="13" y="57.40" width="4" height="1.3" fill="#f47a67"/><rect x="17" y="57.40" width="1" height="1.3" fill="#80d0f8"/><rect x="0" y="59.45" width="1" height="1.3" fill="#f0ae0c"/><rect x="0" y="65.60" width="46" height="1.3" fill="#6ac46c"/><rect x="0" y="63" width="62" height="2" fill="#2a4a6a"/></svg>
<div class="a" style="left:845px;top:22px;width:15px;height:430px;background:#4f4f4f;border-left:1px solid #555"></div>
<div class="a" style="left:845px;top:452px;width:15px;height:474px;background:#2f2f2f;border-left:1px solid #3a3a3a"></div>
<div class="a" style="left:846px;top:464px;width:14px;height:2px;background:#9a9a9a"></div></div>
<div id="vsep" class="a"></div><div class="a" style="left:651px;top:92px;width:1px;height:924px;background:#2a2a2a"></div>
<div id="status" class="a"><div class="a" style="left:0;top:0;width:451px;height:2px;background:#2f2f2f"></div><div class="a" style="left:0;top:2px;width:1512px;height:28px">
  <div class="a" style="left:8px;top:7px;font-size:12px;color:#b0b0b0;line-height:14px"><span class="cj">页面路径</span></div>
  <div class="car" style="left:61px;top:13px;border-top-color:#aaa"></div>
  <div class="a" style="left:75px;top:8px;width:1px;height:13px;background:#555"></div>
  <div class="a" style="left:83px;top:7px;font-size:11.3px;color:#b0b0b0;line-height:14px">pages/classic/classic</div>
  <svg width="14" height="14" style="left:197px;top:8px"><path d="M3.5 3.5 v-2 h8 v8 h-2" fill="none" stroke="#aaa" stroke-width="1"/><rect x="1.5" y="3.5" width="8" height="9" fill="none" stroke="#aaa" stroke-width="1"/></svg>
  <svg width="20" height="14" style="left:425px;top:7px"><path d="M2 7 Q10 -1 18 7 Q10 15 2 7 Z" fill="none" stroke="#888" stroke-width="1"/><circle cx="10" cy="7" r="2.6" fill="none" stroke="#888" stroke-width="1"/></svg>
  <div class="a" style="left:451px;top:0;width:1px;height:28px;background:#2a2a2a"></div>
  <svg width="60" height="16" style="left:468px;top:6px"><circle cx="7" cy="8" r="5.8" fill="none" stroke="#9a9a9a" stroke-width="1"/><path d="M4.6 5.6 l4.8 4.8 M9.4 5.6 l-4.8 4.8" stroke="#9a9a9a" stroke-width="1"/><path d="M33 2.5 L39 13 H27 Z" fill="none" stroke="#9a9a9a" stroke-width="1"/><path d="M33 6 v4 M33 11 v1" stroke="#9a9a9a" stroke-width="1"/></svg>
  <div class="a" style="left:485px;top:7px;font-size:12px;color:#a0a0a0;line-height:14px">0</div>
  <div class="a" style="left:514px;top:7px;font-size:12px;color:#a0a0a0;line-height:14px">0</div>
  <div class="a" style="left:1222px;top:7px;font-size:12px;color:#a8a8a8;line-height:14px;white-space:nowrap"><span class="cj">行</span> 32<span class="cj">，列</span> 1</div>
  <div class="a" style="left:1299px;top:7px;font-size:12px;color:#a8a8a8;line-height:14px;white-space:nowrap"><span class="cj">空格</span>: 2</div>
  <div class="a" style="left:1352px;top:7px;font-size:12px;color:#a8a8a8;line-height:14px">UTF-8</div>
  <div class="a" style="left:1400px;top:7px;font-size:11px;color:#a8a8a8;line-height:14px">CRLF</div>
  <div class="a" style="left:1441px;top:7px;font-size:11px;color:#a8a8a8;line-height:14px">CSS</div>
  <svg width="16" height="16" style="left:1480px;top:6px"><path d="M3 12 h10 l-1.5-2 v-4 a3.5 3.5 0 0 0-7 0 v4 z M6.5 13.5 a1.5 1.5 0 0 0 3 0" fill="#e6e6e6"/></svg>
</div>
</div>
<div id="overlay" class="a">
  <div class="ot"><div class="ol"><span class="oc">通过看色块</span>1<span class="oc">和色块</span>3</div><div class="ol"><span class="oc">可以知道他们的总和为</span>200px</div><div class="ol"><span class="oc">那么如果说我们不要距离</span>A<span class="oc">和距离</span>B</div><div class="ol"><span class="oc">那么完全可以将容器设置为</span>200px</div><div class="ol"><span class="oc">这样的话，前端看上去就直接贴合了</span></div><div class="ol"><span class="oc">不是吗？</span></div></div>
</div>
<div id="phone" class="a">
  <!-- status bar -->
  <svg width="414" height="64" style="left:0;top:0">
    <g fill="#000"><circle cx="13.2" cy="11.8" r="2.9"/><circle cx="19.9" cy="11.8" r="2.9"/><circle cx="26.6" cy="11.8" r="2.9"/><circle cx="33.3" cy="11.8" r="2.9"/><circle cx="40" cy="11.8" r="2.9"/></g>
    <path d="M89 10 q6-5.2 12 0 l-1.2 1.3 q-4.8-4-9.6 0 z M91.2 12.4 q3.8-3.2 7.6 0 l-1.2 1.3 q-2.6-2.1-5.2 0 z M93.4 14.7 q1.6-1.3 3.2 0 l-1.6 1.8 z" fill="#000"/>
    <rect x="381.5" y="7.5" width="22" height="9" rx="1.6" fill="none" stroke="#000" stroke-width="1.2"/>
    <rect x="383.5" y="9.5" width="18" height="5" fill="#000"/>
    <path d="M404.5 10.2 a1.6 1.6 0 0 1 0 3.6 z" fill="#000"/>
    <rect x="317.5" y="26.5" width="86" height="32" rx="16" fill="none" stroke="#e2e2e2" stroke-width="1"/>
    <circle cx="329.6" cy="42.6" r="2.4" fill="#000"/><circle cx="338.8" cy="42.6" r="3.4" fill="#000"/><circle cx="347.6" cy="42.6" r="2.4" fill="#000"/>
    <circle cx="381.5" cy="42.5" r="7.6" fill="none" stroke="#000" stroke-width="1.9"/><circle cx="381.5" cy="42.5" r="3" fill="#000"/>
  </svg>
  <div class="a" style="left:47px;top:4px;font-size:11px;color:#222;line-height:14px">WeChat</div>
  <div class="a" style="left:0;top:4px;width:414px;text-align:center;font-size:12px;color:#222;line-height:14px">8:37</div>
  <div class="a" style="left:349px;top:5px;font-size:11px;color:#222;line-height:14px">100%</div>
  <div class="a" style="left:0;top:37px;width:414px;text-align:center;font-size:12.5px;color:#111;line-height:15px">WeChat</div>
  <!-- content -->
  <div class="a" style="left:0;top:64px;width:414px;height:400px;background:#a0a0a0"></div>
  <div class="a" style="left:0;top:64px;width:150px;height:100px;background:#7fffd4"></div>
  <div class="a" style="left:150px;top:64px;width:150px;height:100px;background:#2ca2d1"></div>
  <div class="a" style="left:0;top:264px;width:150px;height:100px;background:#f04242"></div>
  <div class="a" style="left:1px;top:68px;font-size:26px;color:#000;line-height:30px">1</div>
  <div class="a" style="left:151px;top:66px;font-size:20px;color:#000;line-height:23px">2</div>
  <div class="a" style="left:0;top:267px;font-size:14px;color:#000;line-height:16px">3</div>
  <svg width="414" height="400" style="left:0;top:64px">
    <g id="dar">
      <path d="M34 0 L38.8 10 H35.3 V90 H38.8 L34 100 L29.2 90 H32.7 V10 H29.2 Z" fill="#fff"/>
    </g>
    <use href="#dar" y="200"/>
    <g id="harr">
      <path d="M40.5 46.4 L66 27.2 L66 33.7 L88.4 35 L87.3 53.2 L65.2 53.7 L64.7 59 Z" transform="translate(3,5)" fill="#dfe2ea" stroke="#1f2a44" stroke-width="1" stroke-linejoin="round"/>
      <path d="M66 27.2 l3.5 3 v3 M88.4 35 l3 5.5 l-1.8 17.5 l-2.3-4.8 M65.2 53.7 l3.2 4.5 l21.3 -.2 M64.7 59 l3.5 6.5 v-7.5" fill="none" stroke="#1f2a44" stroke-width="1"/>
      <path d="M40.5 46.4 L66 27.2 L66 33.7 L88.4 35 L87.3 53.2 L65.2 53.7 L64.7 59 Z" fill="#fff" stroke="#1f2a44" stroke-width="1" stroke-linejoin="round"/>
      <path d="M50 49 l12 6 M68 51 h17" stroke="#c9ced8" stroke-width=".8"/>
    </g>
    <use href="#harr" y="202.5"/>
  </svg>
  <div class="a" style="left:101px;top:88px;width:105px;height:45px;border-radius:8px;background:#d65056"></div>
  <div class="a" style="left:96px;top:293px;width:112px;height:41px;border-radius:8px;background:rgba(211,78,86,.95)"></div>
  <div class="a" style="left:101px;top:85.5px;width:105px;line-height:45px;text-align:center;font-family:'Liberation Serif',serif;font-weight:bold;font-size:29px;color:#fff;letter-spacing:1.5px">100px</div>
  <div class="a" style="left:96px;top:290.5px;width:112px;line-height:41px;text-align:center;font-family:'Liberation Serif',serif;font-weight:bold;font-size:29px;color:#fff;letter-spacing:1.5px">100px</div>
</div>
<script>
(function(){try{var s=document.createElement('span');s.style.cssText='position:absolute;left:-9999px;top:0;font:100px "Liberation Sans",sans-serif;white-space:nowrap';s.textContent='\u901a\u8fc7\u770b\u8272';document.body.appendChild(s);var w=s.getBoundingClientRect().width;document.body.removeChild(s);if(w>350)document.documentElement.className+=' hascjk';}catch(e){}})();
</script></body></html>
